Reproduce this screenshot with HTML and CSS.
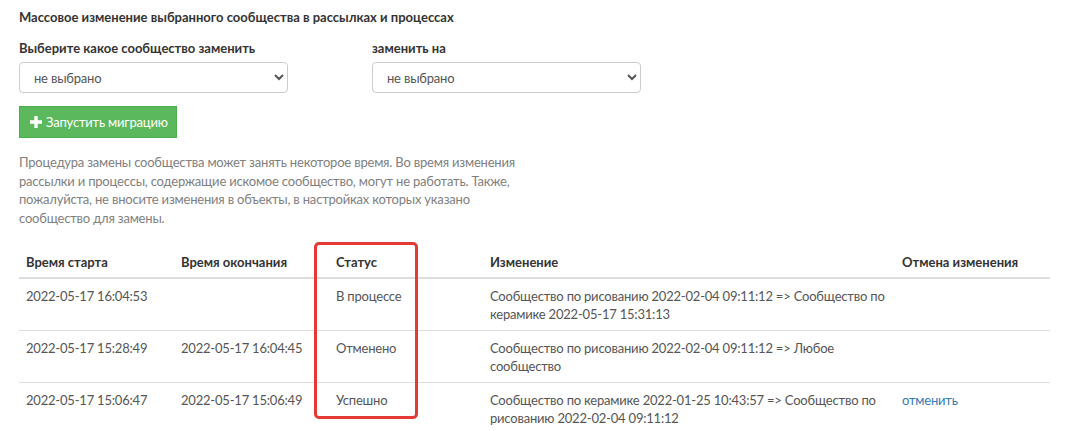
FILE: index.html
```html
<!DOCTYPE html>
<html lang="ru">
<head>
    <meta charset="UTF-8">
    <meta name="viewport" content="width=device-width, initial-scale=1.0">
    <title>Массовое изменение сообщества</title>
    <link rel="stylesheet" href="styles.css">
</head>
<body>
    <div class="page">
        <h4 class="page-title">Массовое изменение выбранного сообщества в рассылках и процессах</h4>

        <form class="migration-form">
            <div class="form-row">
                <div class="form-group">
                    <label for="from">Выберите какое сообщество заменить</label>
                    <select id="from">
                        <option>не выбрано</option>
                    </select>
                </div>
                <div class="form-group">
                    <label for="to">заменить на</label>
                    <select id="to">
                        <option>не выбрано</option>
                    </select>
                </div>
            </div>

            <button type="button" class="btn-start">
                <svg class="plus" width="12" height="12" viewBox="0 0 12 12"><path d="M4.3 0h3.4v4.3H12v3.4H7.7V12H4.3V7.7H0V4.3h4.3z" fill="#fff"/></svg>
                Запустить миграцию
            </button>
        </form>

        <p class="note">Процедура замены сообщества может занять некоторое время. Во время изменения рассылки и процессы, содержащие искомое сообщество, могут не работать. Также, пожалуйста, не вносите изменения в объекты, в настройках которых указано сообщество для замены.</p>

        <div class="table-wrap">
            <table class="history">
                <thead>
                    <tr>
                        <th class="col-start">Время старта</th>
                        <th class="col-end">Время окончания</th>
                        <th class="col-status">Статус</th>
                        <th class="col-change">Изменение</th>
                        <th class="col-cancel">Отмена изменения</th>
                    </tr>
                </thead>
                <tbody>
                    <tr>
                        <td>2022-05-17 16:04:53</td>
                        <td></td>
                        <td>В процессе</td>
                        <td>Сообщество по рисованию 2022-02-04 09:11:12 =&gt; Сообщество по керамике 2022-05-17 15:31:13</td>
                        <td></td>
                    </tr>
                    <tr>
                        <td>2022-05-17 15:28:49</td>
                        <td>2022-05-17 16:04:45</td>
                        <td>Отменено</td>
                        <td>Сообщество по рисованию 2022-02-04 09:11:12 =&gt; Любое сообщество</td>
                        <td></td>
                    </tr>
                    <tr>
                        <td>2022-05-17 15:06:47</td>
                        <td>2022-05-17 15:06:49</td>
                        <td>Успешно</td>
                        <td>Сообщество по керамике 2022-01-25 10:43:57 =&gt; Сообщество по рисованию 2022-02-04 09:11:12</td>
                        <td><a href="#" class="cancel-link">отменить</a></td>
                    </tr>
                </tbody>
            </table>
            <div class="highlight"></div>
        </div>
    </div>
</body>
</html>
```

FILE: styles.css
```css
body {
    margin: 0;
    padding: 0;
    font-family: Lato, Arial, sans-serif;
    font-size: 13px;
    letter-spacing: -0.2px;
    color: #555;
    background: #fff;
}

.page {
    padding: 8px 20px 0 19px;
}

.page-title {
    margin: 0 0 13px;
    font-size: 13px;
    line-height: 18px;
    font-weight: bold;
    letter-spacing: 0;
    color: #333;
}

.form-row {
    display: flex;
    gap: 84px;
}

.form-group {
    width: 269px;
}

label {
    display: block;
    font-weight: bold;
    letter-spacing: 0;
    color: #333;
    line-height: 18px;
    margin-bottom: 5px;
}

select {
    width: 100%;
    height: 31px;
    padding: 0 10px;
    border: 1px solid #ccc;
    border-radius: 4px;
    background-color: #fff;
    font-family: inherit;
    font-size: 13px;
    letter-spacing: -0.2px;
    color: #555;
}

.btn-start {
    display: flex;
    align-items: center;
    gap: 4px;
    margin-top: 13px;
    height: 32px;
    padding: 0 8px 0 10px;
    white-space: nowrap;
    background-color: #5cb85c;
    border: 1px solid #4cae4c;
    border-radius: 0;
    color: #fff;
    font-family: inherit;
    font-size: 13px;
    letter-spacing: -0.2px;
    cursor: pointer;
}

.note {
    max-width: 520px;
    margin: 15px 0 0;
    line-height: 18.6px;
    color: #808080;
}

.table-wrap {
    position: relative;
    margin-top: 18px;
    width: 1031px;
}

.history {
    width: 100%;
    border-collapse: collapse;
    table-layout: fixed;
}

.history th,
.history td {
    box-sizing: border-box;
    padding: 8px 7px;
    line-height: 18px;
    text-align: left;
    vertical-align: top;
}

.history th {
    font-weight: bold;
    letter-spacing: 0;
    color: #333;
    border-bottom: 2px solid #ddd;
    padding-bottom: 6px;
}

.history td {
    border-bottom: 1px solid #ddd;
    padding-bottom: 7px;
}

.history tbody tr:last-child td {
    border-bottom: none;
}

.col-start,
.col-end,
.col-cancel {
    width: 155px;
}

.col-status {
    width: 154px;
}

.cancel-link {
    color: #337ab7;
    text-decoration: none;
}

.highlight {
    position: absolute;
    left: 295px;
    top: -3px;
    width: 98px;
    height: 171px;
    border: 3px solid #e53935;
    border-radius: 5px;
    pointer-events: none;
}
```
